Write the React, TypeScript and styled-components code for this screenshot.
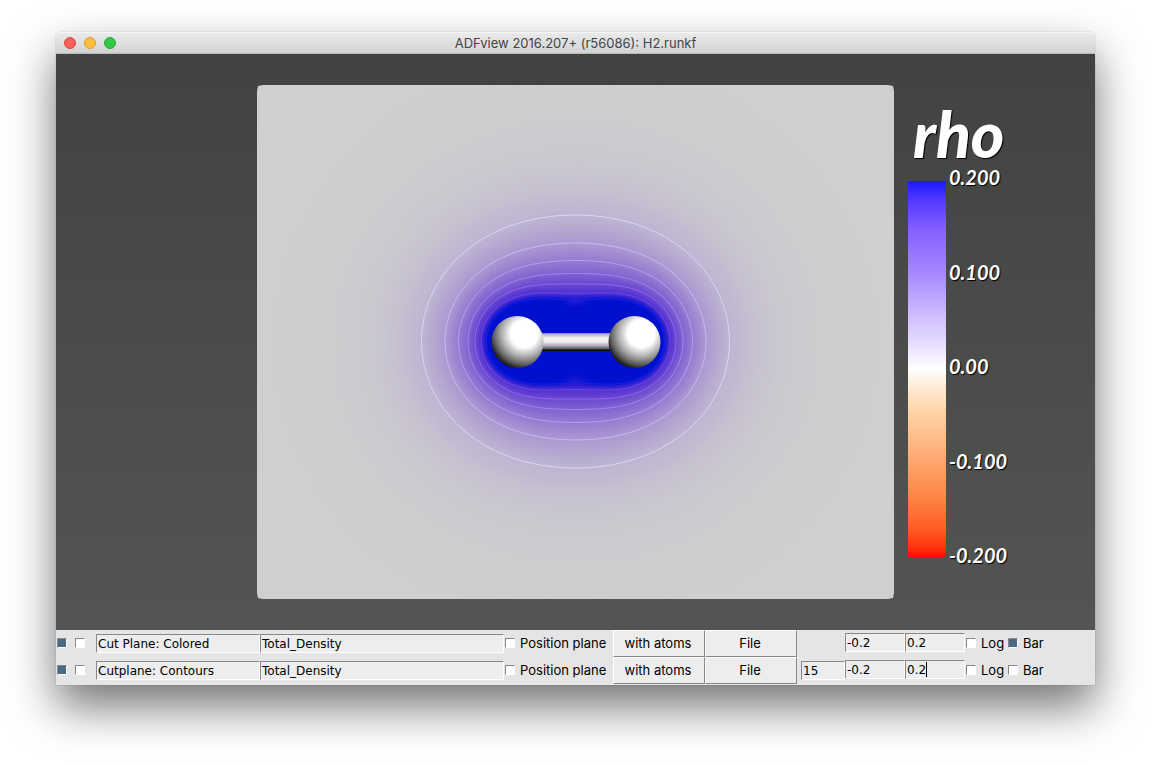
import React from "react";
import styled, { createGlobalStyle } from "styled-components";

const GlobalStyle = createGlobalStyle`
  *, *::before, *::after { box-sizing: border-box; }
  body {
    margin: 0;
    background: #fff;
    font-family: Inter, "Liberation Sans", sans-serif;
    font-size: 13px;
    color: #000;
  }
`;

const Desktop = styled.main`
  padding: 32px 56px 80px;
`;

const AppWindow = styled.section`
  border-radius: 5px 5px 0 0;
  box-shadow: 0 0 1px rgba(0, 0, 0, 0.5), 0 22px 46px rgba(0, 0, 0, 0.54);
`;

const TitleBar = styled.header`
  display: grid;
  grid-template-columns: 1fr auto 1fr;
  align-items: center;
  height: 22px;
  padding: 0 8px;
  border-radius: 5px 5px 0 0;
  border-bottom: 1px solid #b4bab4;
  box-shadow: inset 0 1px 0 #f6f6f6;
  background: linear-gradient(#ebebeb, #d3d3d3);
`;

const Lights = styled.div`
  display: flex;
  gap: 8px;
`;

const Light = styled.button<{ $fill: string; $edge: string }>`
  width: 12px;
  height: 12px;
  padding: 0;
  border: 1px solid ${(p) => p.$edge};
  border-radius: 50%;
  background: ${(p) => p.$fill};
`;

const Title = styled.h1`
  margin: 0;
  font-size: 13px;
  font-weight: 400;
  line-height: 20px;
  color: #444;
`;

const Viewport = styled.div`
  display: grid;
  grid-template-columns: 201fr 637fr 201fr;
  padding: 31px 0;
  background: linear-gradient(#414341, #535553);
`;

const Plane = styled.svg`
  grid-column: 2;
  display: block;
  width: 100%;
  height: auto;
`;

const Legend = styled.aside`
  padding: 17px 0 0 14px;
  font-family: Lato, "Liberation Sans", sans-serif;
  font-style: italic;
  font-weight: 700;
  color: #fff;
  text-shadow: 1px 1px 1px #000;
`;

const LegendTitle = styled.h2`
  margin: 0;
  padding-left: 5px;
  font-size: 64px;
  line-height: 64px;
  font-weight: 900;
`;

const Scale = styled.div`
  display: flex;
  gap: 3px;
  height: 400px;
`;

const ColorBar = styled.div`
  width: 38px;
  margin: 15px 0 9px;
  background: linear-gradient(
    #1a1aff 0%, #5238ff 5%, #8660ff 13%, #a88aff 25%, #cdb8ff 35%, #e6dcff 43%,
    #fff 50%, #ffe6cb 56%, #ffcf9f 63%, #ffa870 74%, #ff8142 85%, #ff5a22 93%,
    #ff2c0a 98%, #ff0800 100%
  );
`;

const Ticks = styled.ul`
  display: flex;
  flex-direction: column;
  justify-content: space-between;
  margin: 0;
  padding: 0;
  list-style: none;
  font-size: 20px;
  line-height: 22px;
`;

const Controls = styled.form`
  padding-bottom: 1px;
  background: #e5e5e5;
`;

const Row = styled.div`
  display: flex;
  align-items: center;
  height: 27px;
  padding: 0 50px 0 1px;
`;

const Toggles = styled.div`
  display: flex;
  gap: 8px;
  width: 39px;
  padding-bottom: 1px;
`;

const Check = styled.input.attrs({ type: "checkbox" })`
  appearance: none;
  flex: none;
  width: 10px;
  height: 10px;
  margin: 0;
  border: 1px solid;
  border-color: #888 #fff #fff #888;
  background: #fff;
  &:checked { background: #4a6a88; }
`;

const CheckLabel = styled.label<{ $width: number }>`
  display: flex;
  flex: none;
  align-items: center;
  gap: 5px;
  width: ${(p) => p.$width}px;
  padding: 0 0 1px 1px;
  line-height: 20px;
  white-space: nowrap;
`;

const Field = styled.input.attrs({ type: "text" })<{ $width?: number }>`
  ${(p) => (p.$width ? `flex: none; width: ${p.$width}px;` : "flex: 1; min-width: 0;")}
  height: 19px;
  padding: 0 1px;
  border: 1px solid;
  border-color: #888 #fff #fff #888;
  border-radius: 0;
  background: #ededed;
  font-family: "DejaVu Sans", sans-serif;
  font-size: 12px;
  color: #000;
  outline: none;
`;

const PushButton = styled.button`
  flex: none;
  width: 92px;
  height: 27px;
  padding: 0 2px 1px 0;
  border: 1px solid;
  border-color: #fff #888 #888 #fff;
  background: #ededed;
  font: inherit;
  color: #000;
`;

const CountSlot = styled.div`
  display: flex;
  flex: none;
  width: 48px;
  padding-left: 4px;
`;

const Range = styled.div`
  position: relative;
  display: flex;
  flex: none;
  padding-bottom: 2px;
`;

const Caret = styled.span`
  position: absolute;
  top: 2px;
  right: 38px;
  width: 1px;
  height: 15px;
  background: #000;
`;

/* Electron density around the two nuclei, in plane coordinates. */

const CX = 318.5;
const CY = 256.5;
const NUCLEUS = 58;

// half width, half height and density of each level curve
const LEVELS = [
  [300, 284, 0.0003],
  [250, 229, 0.0022],
  [224, 201, 0.0045],
  [201, 177, 0.0085],
  [178, 152, 0.016],
  [154, 126.5, 0.0286],
  [130.5, 98.5, 0.0571],
  [117, 81, 0.0857],
  [107.5, 68, 0.1143],
  [100.5, 57.5, 0.1429],
  [94.5, 48, 0.1714],
  [89, 41.5, 0.2],
];

// surface colour of the plane for a density
const COLORS: [number, number[]][] = [
  [0, [207, 207, 207]],
  [0.0286, [190, 180, 209]],
  [0.0571, [171, 151, 209]],
  [0.0857, [149, 122, 208]],
  [0.1143, [129, 96, 208]],
  [0.1429, [105, 70, 208]],
  [0.1714, [78, 48, 208]],
  [0.188, [38, 28, 208]],
  [0.2, [0, 16, 205]],
];

function colorAt(v: number) {
  let i = 1;
  while (i < COLORS.length - 1 && COLORS[i][0] < v) i++;
  const [v0, c0] = COLORS[i - 1];
  const [v1, c1] = COLORS[i];
  const t = Math.min(1, (v - v0) / (v1 - v0));
  return `rgb(${c0.map((c, k) => Math.round(c + (c1[k] - c) * t)).join(",")})`;
}

function levelCurve(a: number, b: number) {
  const near = a - NUCLEUS;
  const far = a + NUCLEUS;
  const side = Math.hypot(NUCLEUS, b);
  let lo = 0.002;
  let hi = 0.05;
  for (let i = 0; i < 30; i++) {
    const q = (lo + hi) / 2;
    if (Math.exp(-q * near) + Math.exp(-q * far) < 2 * Math.exp(-q * side)) lo = q;
    else hi = q;
  }
  const q = lo;
  const value = Math.exp(-q * near) + Math.exp(-q * far);
  const points: string[] = [];
  for (let n = 0; n < 120; n++) {
    const angle = (n / 120) * Math.PI * 2;
    const c = Math.cos(angle);
    const s = Math.sin(angle);
    let r0 = Math.min(a, b) * 0.7;
    let r1 = a * 1.2;
    for (let i = 0; i < 20; i++) {
      const r = (r0 + r1) / 2;
      const f =
        Math.exp(-q * Math.hypot(r * c - NUCLEUS, r * s)) +
        Math.exp(-q * Math.hypot(r * c + NUCLEUS, r * s));
      if (f > value) r0 = r;
      else r1 = r;
    }
    points.push(`${(CX + r0 * c).toFixed(2)} ${(CY + r0 * s).toFixed(2)}`);
  }
  return `M${points.join("L")}Z`;
}

const shells: { d: string; fill: string }[] = [];
for (let i = 0; i < LEVELS.length - 1; i++) {
  const [a0, b0, v0] = LEVELS[i];
  const [a1, b1, v1] = LEVELS[i + 1];
  const steps = Math.max(6, Math.round((b0 - b1) / 2));
  for (let k = 0; k < steps; k++) {
    const t = k / steps;
    shells.push({
      d: levelCurve(a0 + (a1 - a0) * t, b0 + (b1 - b0) * t),
      fill: colorAt(v0 + (v1 - v0) * t),
    });
  }
}
shells.push({ d: levelCurve(89, 41.5), fill: colorAt(0.2) });

const CONTOUR_COLORS = ["#ded3f6", "#cbb7f4", "#b79cf3", "#a383f2", "#8d67f2", "#6b45ee", "#0d22f8"];
const contours = LEVELS.slice(5).map(([a, b], i) => ({ d: levelCurve(a, b), stroke: CONTOUR_COLORS[i] }));

function DensityPlane() {
  return (
    <Plane viewBox="0 0 637 514" role="img" aria-label="Electron density of H2">
      <defs>
        <radialGradient id="atom" cx="0.63" cy="0.34" r="0.73">
          <stop offset="0" stopColor="#fff" />
          <stop offset="0.36" stopColor="#fff" />
          <stop offset="0.45" stopColor="#e0e0e0" />
          <stop offset="0.62" stopColor="#a8a8a8" />
          <stop offset="0.8" stopColor="#626262" />
          <stop offset="0.93" stopColor="#202020" />
          <stop offset="1" stopColor="#161616" />
        </radialGradient>
        <linearGradient id="bond" x1="0" y1="0" x2="0" y2="1">
          <stop offset="0" stopColor="#8c8c8c" />
          <stop offset="0.12" stopColor="#c4c4c4" />
          <stop offset="0.28" stopColor="#f4f4f4" />
          <stop offset="0.48" stopColor="#f0f0f0" />
          <stop offset="0.7" stopColor="#b0b0b0" />
          <stop offset="0.86" stopColor="#606060" />
          <stop offset="0.96" stopColor="#0c0c0c" />
          <stop offset="1" stopColor="#000" />
        </linearGradient>
        <radialGradient id="dip">
          <stop offset="0" stopColor="#3020d2" stopOpacity="0.7" />
          <stop offset="1" stopColor="#3020d2" stopOpacity="0" />
        </radialGradient>
        <clipPath id="sheet">
          <path d="M1 1L6 0H631L636 1L637 6V508L636 513L631 514H6L1 513L0 508V6Z" />
        </clipPath>
      </defs>
      <g clipPath="url(#sheet)">
        <rect width="637" height="514" fill="#cfcfcf" />
        {shells.map((s, i) => (
          <path key={i} d={s.d} fill={s.fill} />
        ))}
        {contours.map((c) => (
          <path key={c.stroke} d={c.d} fill="none" stroke={c.stroke} strokeWidth="1" />
        ))}
      </g>
      <ellipse cx="318.5" cy="216" rx="16" ry="7" fill="url(#dip)" />
      <ellipse cx="318.5" cy="297" rx="16" ry="7" fill="url(#dip)" />
      <rect x="284" y="248" width="70" height="18" fill="url(#bond)" />
      <circle cx="260.5" cy="257" r="26" fill="url(#atom)" />
      <circle cx="377.5" cy="257" r="26" fill="url(#atom)" />
    </Plane>
  );
}

type RowData = {
  name: string;
  count?: string;
  bar: boolean;
  editing?: boolean;
};

const ROWS: RowData[] = [
  { name: "Cut Plane: Colored", bar: true },
  { name: "Cutplane: Contours", count: "15", bar: false, editing: true },
];

function ControlRow({ name, count, bar, editing }: RowData) {
  return (
    <Row role="group" aria-label={name}>
      <Toggles>
        <Check aria-label="Visible" defaultChecked />
        <Check aria-label="Selected" />
      </Toggles>
      <Field $width={164} aria-label="Type" defaultValue={name} />
      <Field aria-label="Field" defaultValue="Total_Density" />
      <CheckLabel $width={109}>
        <Check />
        Position plane
      </CheckLabel>
      <PushButton type="button">with atoms</PushButton>
      <PushButton type="button">File</PushButton>
      <CountSlot>
        {count && <Field $width={44} aria-label="Number of contours" defaultValue={count} />}
      </CountSlot>
      <Range>
        <Field $width={60} aria-label="Minimum" defaultValue="-0.2" />
        <Field $width={60} aria-label="Maximum" defaultValue="0.2" />
        {editing && <Caret />}
      </Range>
      <CheckLabel $width={42}>
        <Check />
        Log
      </CheckLabel>
      <CheckLabel $width={38}>
        <Check defaultChecked={bar} />
        Bar
      </CheckLabel>
    </Row>
  );
}

export default function App() {
  return (
    <>
      <GlobalStyle />
      <Desktop>
        <AppWindow>
          <TitleBar>
            <Lights>
              <Light aria-label="Close" $fill="#fc605c" $edge="#e0443f" />
              <Light aria-label="Minimize" $fill="#fdbc40" $edge="#dea034" />
              <Light aria-label="Zoom" $fill="#34c84a" $edge="#27aa35" />
            </Lights>
            <Title>ADFview 2016.207+ (r56086): H2.runkf</Title>
          </TitleBar>
          <Viewport>
            <DensityPlane />
            <Legend>
              <LegendTitle>rho</LegendTitle>
              <Scale>
                <ColorBar />
                <Ticks>
                  {["0.200", "0.100", "0.00", "-0.100", "-0.200"].map((t) => (
                    <li key={t}>{t}</li>
                  ))}
                </Ticks>
              </Scale>
            </Legend>
          </Viewport>
          <Controls>
            {ROWS.map((row) => (
              <ControlRow key={row.name} {...row} />
            ))}
          </Controls>
        </AppWindow>
      </Desktop>
    </>
  );
}
